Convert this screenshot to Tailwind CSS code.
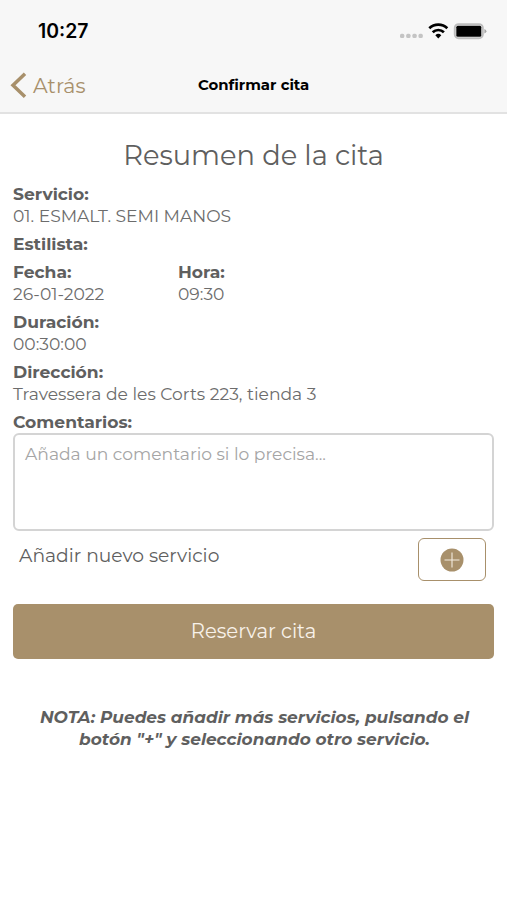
<!DOCTYPE html>
<html lang="es">
<head>
<meta charset="utf-8">
<title>Confirmar cita</title>
<script src="https://cdn.jsdelivr.net/npm/@tailwindcss/browser@4"></script>
</head>
<body class="w-[507px] h-[900px] overflow-hidden bg-white font-['Montserrat','Inter',sans-serif] text-[#5f5f5f]">
<header class="h-[114px] bg-[#f7f7f7] border-b-2 border-[#e2e2e2] flex flex-col">
  <div class="h-[62px] flex items-center justify-between pl-[38px] pr-[20px]">
    <span class="font-['Inter',sans-serif] text-[19.4px] font-semibold text-black pt-[2px]">10:27</span>
    <svg class="w-[87px] h-[20px]" viewBox="0 0 87 20">
      <g fill="#c4c4c4"><rect x="0" y="12.8" width="4.3" height="4.3" rx="1.5"/><rect x="6.2" y="12.8" width="4.3" height="4.3" rx="1.5"/><rect x="12.4" y="12.8" width="4.3" height="4.3" rx="1.5"/><rect x="18.5" y="12.8" width="4.3" height="4.3" rx="1.5"/></g>
      <g fill="none" stroke="#000" stroke-width="2.7"><path d="M29.3 7.2a13 13 0 0 1 18 0"/><path d="M32.7 11.3a8 8 0 0 1 11.2 0"/></g>
      <path d="M35.3 14.2a4.3 4.3 0 0 1 6 0L38.3 17.4z" fill="#000"/>
      <rect x="54.8" y="3.2" width="28" height="14" rx="3.8" fill="none" stroke="#bdbdbd" stroke-width="2"/>
      <rect x="56.3" y="4.8" width="25" height="10.9" rx="1.5" fill="#000"/>
      <path d="M84.4 8q2 .8 2 2.2t-2 2.2z" fill="#a5a5a5"/>
    </svg>
  </div>
  <div class="h-[50px] grid grid-cols-[198px_111px_1fr] items-center pb-[3px]">
    <div class="flex items-center pl-[10px] text-[#a8906b]">
      <svg class="w-[17px] h-[28px] mr-[6px]" viewBox="0 0 17 28"><path d="M15 1.7L3 13.2L15 24.7" fill="none" stroke="currentColor" stroke-width="3.5"/></svg>
      <span class="text-[20.5px] pt-[2px]">Atrás</span>
    </div>
    <span class="text-[14.9px] font-bold text-black whitespace-nowrap">Confirmar cita</span>
  </div>
</header>
<main class="px-[13px] whitespace-nowrap">
  <h1 class="h-[69px] pt-[21px] text-center text-[27.3px] leading-[42px]">Resumen de la cita</h1>
  <section class="text-[17.15px] leading-[22px] flex flex-col gap-[6px] text-[#6c6c6c]">
    <div><div class="font-bold text-[#5f5f5f]">Servicio:</div><div>01. ESMALT. SEMI MANOS</div></div>
    <div class="font-bold text-[#5f5f5f]">Estilista:</div>
    <div class="grid grid-cols-[165px_1fr]">
      <div><div class="font-bold text-[#5f5f5f]">Fecha:</div><div>26-01-2022</div></div>
      <div><div class="font-bold text-[#5f5f5f]">Hora:</div><div>09:30</div></div>
    </div>
    <div><div class="font-bold text-[#5f5f5f]">Duración:</div><div>00:30:00</div></div>
    <div><div class="font-bold text-[#5f5f5f]">Dirección:</div><div>Travessera de les Corts 223, tienda 3</div></div>
    <div class="font-bold text-[#5f5f5f]">Comentarios:</div>
  </section>
  <div class="h-[98px] border-2 border-[#d4d4d4] rounded-[6px] px-[10px] pt-[8px] text-[17.15px] leading-[22px] text-[#a5a5a5]">Añada un comentario si lo precisa...</div>
  <div class="flex justify-between pt-[7px] pl-[6px] pr-[8px]">
    <span class="text-[18.7px] leading-[35px] self-start">Añadir nuevo servicio</span>
    <button class="w-[68px] h-[43px] border-[1.5px] border-[#a8906b] rounded-[6px] flex items-center justify-center">
      <svg class="w-[24px] h-[24px]" viewBox="0 0 24 24"><circle cx="12" cy="12" r="11.5" fill="#a8906b"/><path d="M12 4.5v15M4.5 12h15" stroke="#f3ecdf" stroke-width="1.1"/></svg>
    </button>
  </div>
  <button class="mt-[23px] w-full h-[55px] rounded-[5px] bg-[#a8906b] text-[#f8f2ea] text-[19.6px]">Reservar cita</button>
  <p class="mt-[47px] pl-[2px] text-center text-[16.95px] leading-[22px] font-bold italic">NOTA: Puedes añadir más servicios, pulsando el<br>botón "+" y seleccionando otro servicio.</p>
</main>
</body>
</html>
